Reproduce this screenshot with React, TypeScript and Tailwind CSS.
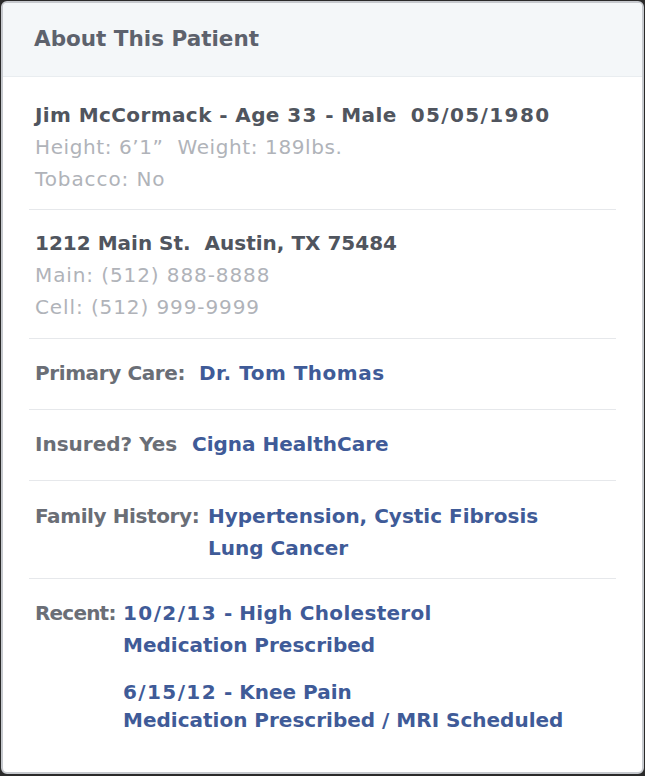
import React from 'react';

const font = { fontFamily: '"DejaVu Sans", "Liberation Sans", sans-serif' };

const Divider = () => <div className="h-px bg-[#e6e8eb]" />;

// Digits in the original face run wider, so numeric runs get a little extra spacing.
const Num = ({ children }: { children: React.ReactNode }) => (
  <span className="tracking-[1.4px]">{children}</span>
);

export default function App() {
  return (
    <div className="h-[776px] w-[645px] bg-[#2a2a2a] p-px" style={font}>
      <div className="flex h-[773px] w-[643px] flex-col overflow-hidden rounded-[6px] border-2 border-[#c6c9ce] bg-white">
        {/* Header */}
        <div className="flex h-[74px] items-center border-b border-[#e9edf0] bg-[#f4f7f9] px-[31px]">
          <h1 className="text-[21.5px] font-bold text-[#5d626d]">About This Patient</h1>
        </div>

        <div className="px-[26px] text-[20px]">
          {/* Identity */}
          <div className="pt-[22px] pb-[14px] pl-[6px] leading-[32px]">
            <p className="font-bold text-[#50555e]">
              <span className="tracking-[0.4px]">Jim McCormack - Age <Num>33</Num> - Male</span>&nbsp;&nbsp;<Num>05/05/1980</Num>
            </p>
            <p className="tracking-[0.6px] text-[#b0b3b9]">Height: 6’1”&nbsp; Weight: 189lbs.</p>
            <p className="tracking-[0.9px] text-[#b0b3b9]">Tobacco: No</p>
          </div>
          <Divider />

          {/* Address */}
          <div className="pt-[17px] pb-[15px] pl-[6px] leading-[32px]">
            <p className="font-bold text-[#50555e]">1212 Main St.&nbsp; Austin, TX 75484</p>
            <p className="tracking-[0.9px] text-[#b0b3b9]">Main: (512) 888-8888</p>
            <p className="tracking-[0.9px] text-[#b0b3b9]">Cell: (512) 999-9999</p>
          </div>
          <Divider />

          {/* Primary care */}
          <div className="flex pt-[18px] pb-[20px] pl-[6px] font-bold leading-[32px]">
            <span className="w-[164px] shrink-0 tracking-[-0.4px] text-[#6a6e76]">Primary Care:</span>
            <span className="tracking-[0.5px] text-[#3f5b98]">Dr. Tom Thomas</span>
          </div>
          <Divider />

          {/* Insurance */}
          <div className="flex pt-[18px] pb-[20px] pl-[6px] font-bold leading-[32px]">
            <span className="w-[157px] shrink-0 text-[#6a6e76]">Insured? Yes</span>
            <span className="text-[#3f5b98]">Cigna HealthCare</span>
          </div>
          <Divider />

          {/* Family history */}
          <div className="flex pt-[19px] pb-[14px] pl-[6px] font-bold leading-[32px]">
            <span className="w-[173px] shrink-0 tracking-[-0.4px] text-[#6a6e76]">Family History:</span>
            <div className="text-[#3f5b98]">
              <p>Hypertension, Cystic Fibrosis</p>
              <p>Lung Cancer</p>
            </div>
          </div>
          <Divider />

          {/* Recent */}
          <div className="flex pt-[18px] pl-[6px] font-bold">
            <span className="w-[88px] shrink-0 leading-[32px] tracking-[-0.8px] text-[#6a6e76]">Recent:</span>
            <div className="text-[#3f5b98]">
              <div className="leading-[32px]">
                <p><Num>10/2/13</Num> - <span className="tracking-[0.3px]">High Cholesterol</span></p>
                <p>Medication Prescribed</p>
              </div>
              <div className="mt-[17px] leading-[28px]">
                <p><Num>6/15/12</Num> - Knee Pain</p>
                <p>Medication Prescribed / MRI Scheduled</p>
              </div>
            </div>
          </div>
        </div>
      </div>
    </div>
  );
}
